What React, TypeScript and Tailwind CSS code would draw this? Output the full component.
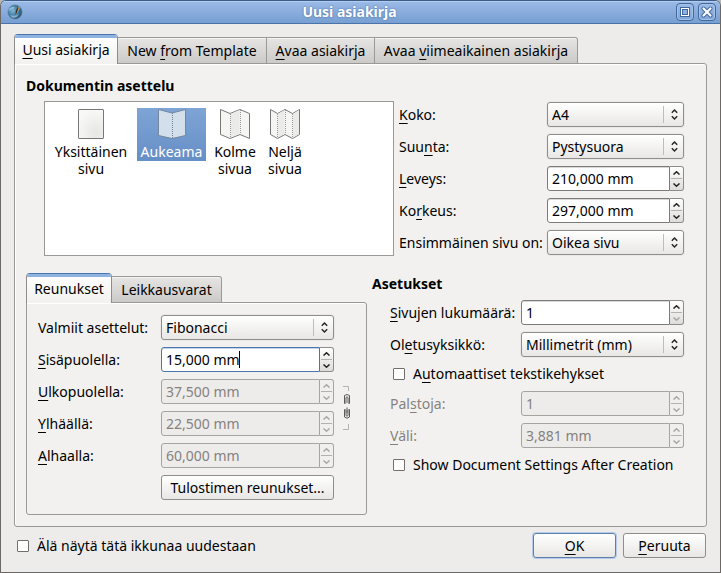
import React, { useState } from 'react';

const field =
  'h-[25px] rounded-[3px] border border-[#8f8d8a] shadow-[0_0_0_1px_rgba(0,0,0,0.03)]';

function Mnemonic({ text }: { text: string }) {
  // "&" marks the letter that follows it as the keyboard accelerator
  const at = text.indexOf('&');
  if (at < 0) return <>{text}</>;
  return (
    <>
      {text.slice(0, at)}
      <span className="underline decoration-1 underline-offset-[3px] [text-decoration-skip-ink:none]">
        {text[at + 1]}
      </span>
      {text.slice(at + 2)}
    </>
  );
}

function Chevron({ down = false }: { down?: boolean }) {
  return (
    <svg width="7" height="4" viewBox="0 0 7 4" fill="none" stroke="currentColor" strokeWidth="1.5">
      <path d={down ? 'M0.5 0.5 L3.5 3.2 L6.5 0.5' : 'M0.5 3.5 L3.5 0.8 L6.5 3.5'} />
    </svg>
  );
}

function Row({
  id,
  label,
  labelClass,
  disabled,
  children,
}: {
  id: string;
  label: string;
  labelClass: string;
  disabled?: boolean;
  children: React.ReactNode;
}) {
  return (
    <div className="flex items-center">
      <label
        htmlFor={id}
        className={`shrink-0 whitespace-nowrap ${labelClass} ${disabled ? 'text-[#85827e]' : ''}`}
      >
        <Mnemonic text={label} />
      </label>
      {children}
    </div>
  );
}

function Select({ id, options }: { id: string; options: string[] }) {
  return (
    <div className="relative min-w-0 flex-1">
      <select
        id={id}
        className={`${field} block w-full appearance-none bg-linear-to-b from-white to-[#e8e7e5] pl-1 pr-6 leading-5 outline-none`}
      >
        {options.map((o) => (
          <option key={o}>{o}</option>
        ))}
      </select>
      <span className="pointer-events-none absolute inset-y-1 right-0 flex w-[21px] items-center justify-center border-l border-[#bfbdba]">
        <svg width="7" height="11" viewBox="0 0 7 11" fill="none" stroke="#222" strokeWidth="1.4">
          <path d="M0.8 3.7 L3.5 1 L6.2 3.7 M0.8 7.3 L3.5 10 L6.2 7.3" />
        </svg>
      </span>
    </div>
  );
}

function Spin({
  id,
  value,
  disabled = false,
  focused = false,
  atMinimum = false,
}: {
  id: string;
  value: string;
  disabled?: boolean;
  focused?: boolean;
  atMinimum?: boolean;
}) {
  const [text, setText] = useState(value);
  const frame = focused
    ? 'border-[#4a75ad] shadow-[inset_0_1px_0_#c3d6ee]'
    : disabled
      ? 'border-[#a6a4a1]'
      : 'border-[#7d7b78] shadow-[inset_0_1px_0_#d8d8d8]';
  return (
    <div className="flex h-[25px] min-w-0 flex-1">
      <div
        className={`relative min-w-0 flex-1 rounded-l-[3px] border ${frame} ${disabled ? 'bg-[#edecea]' : 'bg-white'}`}
      >
        <input
          id={id}
          type="text"
          value={text}
          disabled={disabled}
          onChange={(e) => setText(e.target.value)}
          className="block h-full w-full bg-transparent pl-1 leading-5 outline-none disabled:text-[#85827e]"
        />
        {focused && <span className="absolute left-[77px] top-[3px] h-[17px] w-px bg-black" />}
      </div>
      <div
        className={`flex w-[14px] flex-col rounded-r-[3px] border border-l-0 px-px ${
          disabled
            ? 'border-[#a6a4a1] bg-[#f0efed] text-[#a9a7a4]'
            : 'border-[#8f8d8a] bg-linear-to-b from-white to-[#dddcda] text-[#222]'
        }`}
      >
        <button
          type="button"
          disabled={disabled}
          aria-label="Suurenna"
          className="flex flex-1 items-center justify-center border-b border-[#b3b1ae]"
        >
          <Chevron />
        </button>
        <button
          type="button"
          disabled={disabled || atMinimum}
          aria-label="Pienennä"
          className={`flex flex-1 items-center justify-center ${atMinimum ? 'text-[#a9a7a4]' : ''}`}
        >
          <Chevron down />
        </button>
      </div>
    </div>
  );
}

function Check({ id, label }: { id: string; label: string }) {
  return (
    <div className="flex items-center gap-2">
      <input
        id={id}
        type="checkbox"
        className="size-3 shrink-0 appearance-none rounded-[1px] border border-[#71706d] bg-white checked:bg-[#6a94cc]"
      />
      <label htmlFor={id} className="whitespace-nowrap">
        <Mnemonic text={label} />
      </label>
    </div>
  );
}

function Tabs({ labels, widths }: { labels: string[]; widths: string[] }) {
  return (
    <div role="tablist" className="relative z-10 -mb-px flex items-end">
      {labels.map((label, i) =>
        i === 0 ? (
          <button
            key={label}
            type="button"
            role="tab"
            aria-selected="true"
            className={`${widths[i]} h-[30px] overflow-hidden whitespace-nowrap rounded-t-[4px] border-x border-t border-x-[#8f8d8a] border-t-[#4a75ad] bg-linear-to-b from-white to-[#f2f1ef]`}
          >
            <span className="block h-[3px] bg-[#8fb3e0]" />
            <span className="block h-[26px] leading-[23px]">
              <Mnemonic text={label} />
            </span>
          </button>
        ) : (
          <button
            key={label}
            type="button"
            role="tab"
            aria-selected="false"
            className={`${widths[i]} h-[27px] whitespace-nowrap border border-l-0 border-[#9b9996] bg-linear-to-b from-[#e6e5e3] to-[#cbcac8] leading-[23px] shadow-[inset_0_1px_0_#f4f4f3] last:rounded-tr-[3px]`}
          >
            <Mnemonic text={label} />
          </button>
        ),
      )}
    </div>
  );
}

function PageIcon({ kind }: { kind: number }) {
  return (
    <svg width="32" height="32" viewBox="0 0 32 32" fill="none" stroke="#777773">
      <defs>
        <radialGradient id="paper" cx="0.7" cy="0.8" r="0.8">
          <stop offset="0" stopColor="#e6e6e4" />
          <stop offset="1" stopColor="#f8f8f7" />
        </radialGradient>
      </defs>
      {kind === 1 && <rect x="3.5" y="1.5" width="25" height="29" rx="0.5" fill="url(#paper)" />}
      {kind === 2 && (
        <>
          <path d="M2.5 1.5 L16 5 L29.5 1.5 V27.5 L16 30.5 L2.5 27.5 Z" fill="#d3dfeb" stroke="#74889d" />
          <path d="M16.5 5 V30" stroke="#6d8299" strokeDasharray="1 1" />
        </>
      )}
      {kind === 3 && (
        <>
          <path d="M1.5 1.5 L11 5.5 L21 1.5 L30.5 5.5 V30.5 L21 26.5 L11 30.5 L1.5 26.5 Z" fill="#f5f5f3" />
          <path d="M11.5 6 L20.5 2 V26 L11.5 29.5 Z" fill="#ebebe9" stroke="none" />
          <path d="M11.5 6 V30 M21.5 2 V27" strokeDasharray="1 1" stroke="#999" />
        </>
      )}
      {kind === 4 && (
        <>
          <path d="M1.5 1.5 L8.5 5.5 L16 1.5 L23.5 5.5 L30.5 1.5 V26.5 L23.5 30.5 L16 26.5 L8.5 30.5 L1.5 26.5 Z" fill="#f5f5f3" />
          <path d="M8.5 6 L15.5 2 V26 L8.5 29.5 Z M24 6 L30 2 V26 L24 29.5 Z" fill="#ebebe9" stroke="none" />
          <path d="M8.5 6 V30 M16.5 2 V27 M23.5 6 V30" strokeDasharray="1 1" stroke="#999" />
        </>
      )}
    </svg>
  );
}

function LayoutItem({
  kind,
  label,
  width,
  selected = false,
}: {
  kind: number;
  label: string;
  width: string;
  selected?: boolean;
}) {
  return (
    <button
      type="button"
      role="option"
      aria-selected={selected}
      className={`${width} flex shrink-0 flex-col items-center gap-[3px] pb-px ${
        selected ? 'bg-linear-to-b from-[#7fa4d6] to-[#668fc6] text-white' : ''
      }`}
    >
      <PageIcon kind={kind} />
      <span className="leading-[17px]">{label}</span>
    </button>
  );
}

function LinkIcon() {
  return (
    <svg width="8" height="44" viewBox="0 0 8 44" fill="none">
      <path d="M0 0.5 H5.5 V5 M0 43.5 H5.5 V38" stroke="#b5b3b0" />
      <path
        d="M1.5 9.5 Q4 7.5 6.5 9.5 V17.5 H5.5 M2.5 17.5 H1.5 V9.5 M3 17 V11.5 Q4 10 5 11.5 V17"
        stroke="#5a5957"
      />
      <path
        d="M2.5 23.5 H1.5 V31 Q4 33.5 6.5 31 V23.5 H5.5 M3 24 V29.5 Q4 31 5 29.5 V24 M4 21.5 V27"
        stroke="#5a5957"
      />
    </svg>
  );
}

function AppLogo() {
  return (
    <svg width="16" height="16" viewBox="0 0 16 16" className="shrink-0">
      <defs>
        <radialGradient id="globe" cx="0.35" cy="0.4" r="0.7">
          <stop offset="0" stopColor="#86b5d2" />
          <stop offset="0.5" stopColor="#4280ab" />
          <stop offset="1" stopColor="#27506f" />
        </radialGradient>
      </defs>
      <circle cx="8" cy="8" r="7" fill="url(#globe)" stroke="#4d7695" strokeWidth="0.6" />
      <path d="M1.5 5 Q5 2 8 3 L6 5 Q4 5 2 7 Z M3 11 Q8 13 12 10 Q9 15 5 13.5 Z" fill="#a5cade" opacity="0.7" />
      <path d="M11.2 2.5 L13 3.4 L10.5 8.7 L8.4 11 L8.7 8 Z" fill="#d9a65e" />
      <path d="M10.8 3 L11.6 3.4 L10 8.5 L8.4 11 L8.7 7 Z" fill="#30343a" />
    </svg>
  );
}

function TitleButton({ label, children }: { label: string; children: React.ReactNode }) {
  return (
    <button
      type="button"
      aria-label={label}
      className="flex size-[18px] items-center justify-center rounded-[4px] border border-[#43689b] bg-linear-to-b from-[#9bbbe5] to-[#7fa5d8] shadow-[inset_0_0_0_1px_#a4c1e8]"
    >
      {children}
    </button>
  );
}

const pushButton =
  'h-[25px] rounded-[3px] border bg-linear-to-b from-white to-[#e8e7e5] leading-[21px] whitespace-nowrap';

export default function App() {
  const page = 'w-[148px]';
  const margins = 'w-[123px]';
  const settings = 'w-[131px]';
  return (
    <div className="bg-[#b9b7b4]">
      <main className="flex min-h-screen flex-col overflow-hidden rounded-t-[6px] border border-[#6b6866] border-t-[#3e5c88] bg-[#edecea] font-['Noto_Sans','Open_Sans',sans-serif] text-sm text-black">
        <header className="flex h-[23px] items-center border-b border-[#4a73aa] bg-linear-to-b from-[#9bbae7] to-[#779fd2] pl-[6px] pr-1 shadow-[inset_0_1px_0_#b3cdf0]">
          <AppLogo />
          <h1 className="flex-1 text-center text-sm font-bold text-white [text-shadow:0_0_2px_#3d659b]">
            Uusi asiakirja
          </h1>
          <div className="flex gap-1">
            <TitleButton label="Suurenna ikkuna">
              <svg width="10" height="10" viewBox="0 0 10 10" fill="none">
                <rect x="0.5" y="0.5" width="9" height="9" stroke="#3f67a0" />
                <rect x="1.5" y="1.5" width="7" height="7" fill="#3f67a0" stroke="white" />
                <rect x="3" y="3" width="4" height="4" fill="#8fb1df" />
              </svg>
            </TitleButton>
            <TitleButton label="Sulje">
              <svg width="12" height="12" viewBox="0 0 12 12" fill="none" strokeLinecap="round">
                <path d="M2.5 2.5 L9.5 9.5 M9.5 2.5 L2.5 9.5" stroke="#3f67a0" strokeWidth="4" />
                <path d="M2.5 2.5 L9.5 9.5 M9.5 2.5 L2.5 9.5" stroke="white" strokeWidth="2.2" />
              </svg>
            </TitleButton>
          </div>
        </header>

        <div className="flex flex-1 flex-col px-[13px] pb-[14px] pt-[10px]">
          <Tabs
            labels={['&Uusi asiakirja', 'New &from Template', '&Avaa asiakirja', 'Avaa &viimeaikainen asiakirja']}
            widths={['w-[104px]', 'w-[149px]', 'w-[108px]', 'w-[203px]']}
          />

          <section className="flex-1 rounded-[3px] rounded-tl-none border border-[#9b9996] bg-[#f2f1ef] pb-[10px] pl-[11px] pr-[22px] pt-[12px] shadow-[inset_0_1px_0_white,inset_1px_0_0_white]">
            <h2 className="font-bold leading-5">Dokumentin asettelu</h2>
            <div className="mt-[5px] flex gap-[5px] pl-[18px]">
              <div
                role="listbox"
                aria-label="Dokumentin asettelu"
                className="flex h-[155px] min-w-0 flex-1 items-start gap-1 border border-[#9b9996] bg-white pl-1 pt-[6px]"
              >
                <LayoutItem kind={1} label="Yksittäinen sivu" width="w-[84px]" />
                <LayoutItem kind={2} label="Aukeama" width="w-[69px]" selected />
                <LayoutItem kind={3} label="Kolme sivua" width="w-[50px]" />
                <LayoutItem kind={4} label="Neljä sivua" width="w-[42px]" />
              </div>
              <div className="flex w-[285px] shrink-0 flex-col gap-[7px] pt-px">
                <Row id="size" label="&Koko:" labelClass={page}>
                  <Select id="size" options={['A4']} />
                </Row>
                <Row id="orientation" label="Suu&nta:" labelClass={page}>
                  <Select id="orientation" options={['Pystysuora']} />
                </Row>
                <Row id="width" label="&Leveys:" labelClass={page}>
                  <Spin id="width" value="210,000 mm" />
                </Row>
                <Row id="height" label="Ko&rkeus:" labelClass={page}>
                  <Spin id="height" value="297,000 mm" />
                </Row>
                <Row id="first" label="Ensimmäinen sivu on:" labelClass={page}>
                  <Select id="first" options={['Oikea sivu']} />
                </Row>
              </div>
            </div>

            <div className="mt-[17px] flex gap-[5px]">
              <div className="w-[341px] shrink-0">
                <Tabs labels={['Reunukset', 'Leikkausvarat']} widths={['w-[86px]', 'w-[110px]']} />
                <div className="flex items-start gap-[9px] rounded-[3px] rounded-tl-none border border-[#9b9996] pb-[14px] pl-[11px] pt-[12px] shadow-[inset_0_1px_0_white]">
                  <div className="flex w-[296px] flex-col gap-[7px]">
                    <Row id="preset" label="Valmiit asettelut:" labelClass={margins}>
                      <Select id="preset" options={['Fibonacci']} />
                    </Row>
                    <Row id="inside" label="&Sisäpuolella:" labelClass={margins}>
                      <Spin id="inside" value="15,000 mm" focused />
                    </Row>
                    <Row id="outside" label="&Ulkopuolella:" labelClass={margins}>
                      <Spin id="outside" value="37,500 mm" disabled />
                    </Row>
                    <Row id="top" label="&Ylhäällä:" labelClass={margins}>
                      <Spin id="top" value="22,500 mm" disabled />
                    </Row>
                    <Row id="bottom" label="&Alhaalla:" labelClass={margins}>
                      <Spin id="bottom" value="60,000 mm" disabled />
                    </Row>
                    <button type="button" className={`${pushButton} w-[173px] self-end border-[#8f8d8a]`}>
                      Tulostimen reunukset...
                    </button>
                  </div>
                  <button type="button" aria-label="Linkitä reunukset" className="mt-[71px]">
                    <LinkIcon />
                  </button>
                </div>
              </div>

              <div className="min-w-0 flex-1">
                <h2 className="pt-px font-bold leading-5">Asetukset</h2>
                <div className="flex flex-col gap-[7px] pl-[18px] pt-[6px]">
                  <Row id="pages" label="&Sivujen lukumäärä:" labelClass={settings}>
                    <Spin id="pages" value="1" atMinimum />
                  </Row>
                  <Row id="unit" label="Ol&etusyksikkö:" labelClass={settings}>
                    <Select id="unit" options={['Millimetrit (mm)']} />
                  </Row>
                  <div className="pl-[3px]">
                    <Check id="frames" label="A&utomaattiset tekstikehykset" />
                  </div>
                  <Row id="columns" label="Pal&stoja:" labelClass={settings} disabled>
                    <Spin id="columns" value="1" disabled />
                  </Row>
                  <Row id="gap" label="&Väli:" labelClass={settings} disabled>
                    <Spin id="gap" value="3,881 mm" disabled />
                  </Row>
                  <div className="pl-[3px]">
                    <Check id="show" label="Show Document Settings After Creation" />
                  </div>
                </div>
              </div>
            </div>
          </section>

          <footer className="mt-[6px] flex items-center gap-[7px] pl-[3px] pr-px">
            <div className="flex-1">
              <Check id="skip" label="Älä näytä tätä ikkunaa uudestaan" />
            </div>
            <button
              type="button"
              className={`${pushButton} w-[83px] border-[#5d7fae] shadow-[0_0_0_1px_#b5cbe8]`}
            >
              <Mnemonic text="&OK" />
            </button>
            <button type="button" className={`${pushButton} w-[83px] border-[#8f8d8a]`}>
              <Mnemonic text="&Peruuta" />
            </button>
          </footer>
        </div>
      </main>
    </div>
  );
}
